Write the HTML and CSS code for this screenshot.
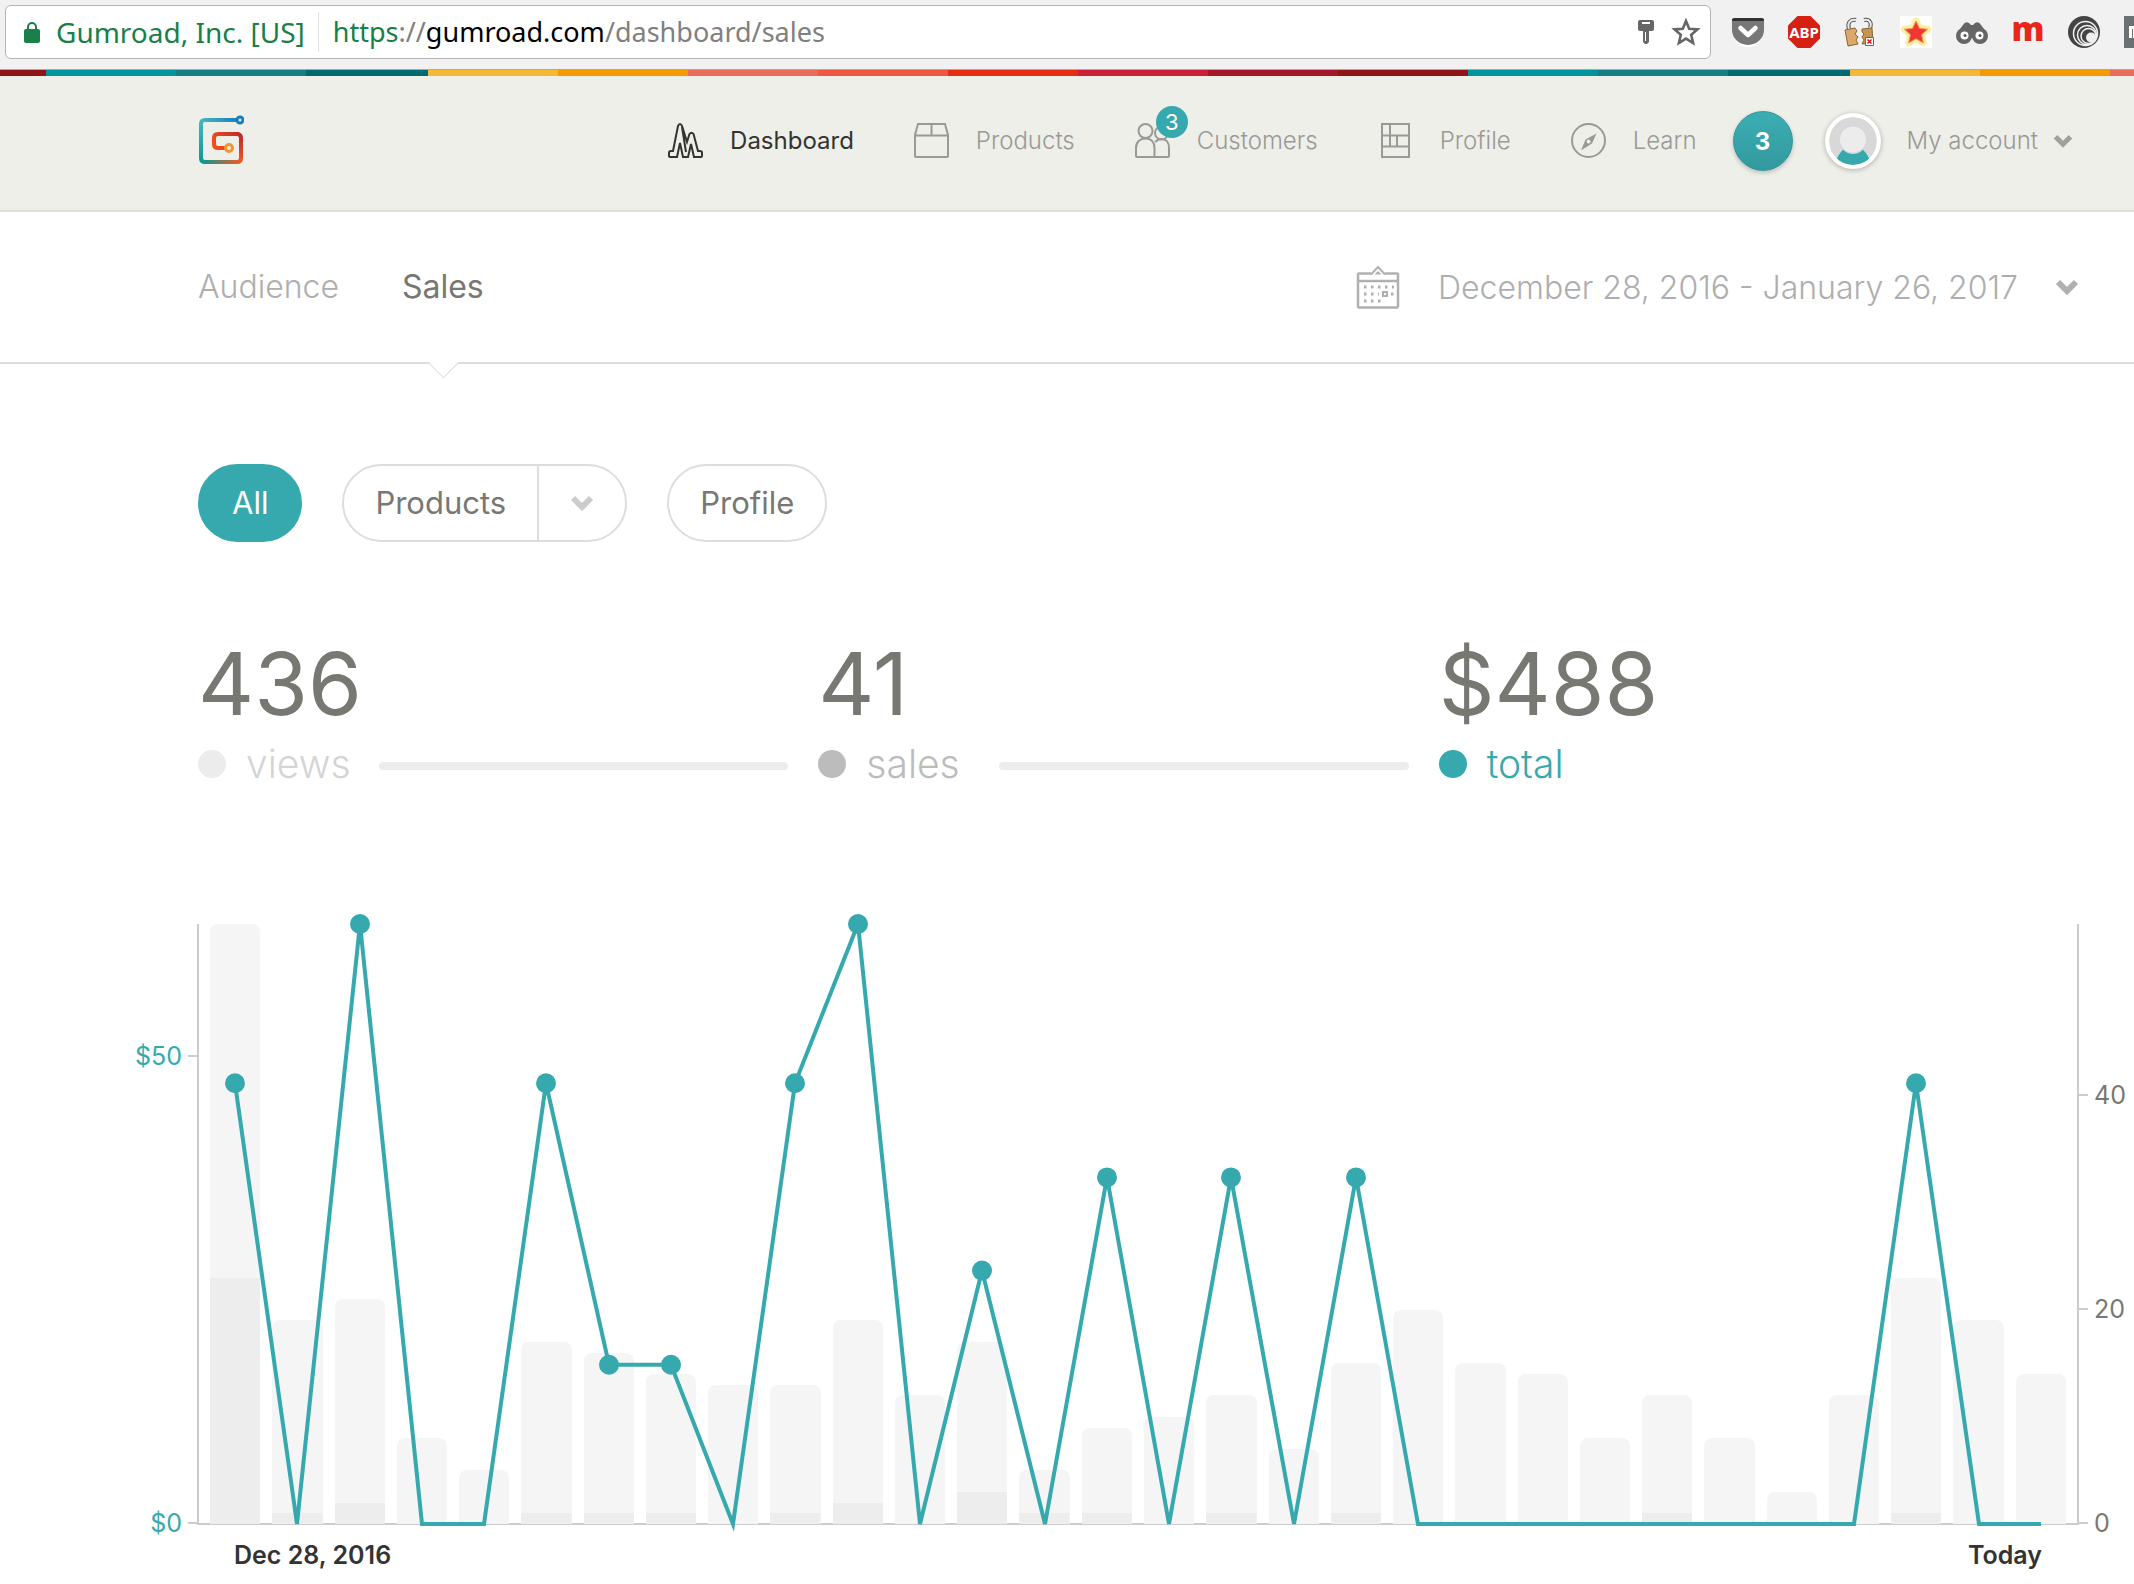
FILE: index.html
```html
<!DOCTYPE html>
<html lang="en">
<head>
<meta charset="utf-8">
<meta name="viewport" content="width=device-width, initial-scale=1">
<title>Gumroad – Sales</title>
<link rel="stylesheet" href="styles.css">
</head>
<body>
<div class="toolbar">
  <div class="address">
    <svg class="lock" width="16" height="22" viewBox="0 0 16 22"><path d="M4 10V6a4 4 0 0 1 8 0v4" fill="none" stroke="#188048" stroke-width="2"/><rect y="8" width="16" height="14" rx="2" fill="#188048"/></svg>
    <span class="owner">Gumroad, Inc. [US]</span>
    <span class="url"><span class="scheme">https</span>://<span class="host">gumroad.com</span>/dashboard/sales</span>
    <button class="bare" type="button" aria-label="Saved password"><svg width="16" height="24" viewBox="0 0 16 24"><path fill="#666" fill-rule="evenodd" d="M2 0h12q2 0 2 2v7q0 2-2 2h-3v11l-2 2H7l-2-2V11H2q-2 0-2-2V2q0-2 2-2zm2 2v2h8V2zm3 10v9h1v-9z"/></svg></button>
    <button class="bare" type="button" aria-label="Bookmark"><svg width="30" height="30" viewBox="0 0 30 30"><path d="M15 4l3.200 7.700 8.300.700-6.300 5.400 1.900 8.200-7.100-4.400-7.100 4.400 1.900-8.200-6.300-5.400 8.300-.700z" fill="none" stroke="#666" stroke-width="2.600"/></svg></button>
  </div>
  <div class="extensions">
    <svg width="32" height="32" viewBox="0 0 32 32"><path d="M0 5h32v10a16 16 0 0 1-32 0z" fill="#fff"/><path d="M0 3h32v11a16 15 0 0 1-32 0z" fill="#777"/><path d="M0 5V4q0-2 2-2h28q2 0 2 2v1z" fill="#333"/><path d="M8.500 12l7.500 7 7.500-7" fill="none" stroke="#fff" stroke-width="4.500" stroke-linecap="round" stroke-linejoin="round"/></svg>
    <svg width="32" height="32" viewBox="0 0 32 32"><path d="M9.500 0h13L32 9.500v13L22.500 32h-13L0 22.500v-13z" fill="#d62012"/><text class="abp" x="16" y="21.500" text-anchor="middle" fill="#fff">ABP</text></svg>
    <svg width="32" height="32" viewBox="0 0 32 32"><path d="M5 13C3 7 6 3 12 4M20 4c6-1 8 3 6 8" fill="none" stroke="#555" stroke-width="4"/><path d="M5 13C3 7 6 3 12 4M20 4c6-1 8 3 6 8" fill="none" stroke="#eee" stroke-width="2"/><path d="M1 14l10-2 2 3-2 3 3 3-2 3 2 4-10 2z" fill="#dba96b" stroke="#8a6434"/><path d="M18 13l10-1 1 15-11 1 2-4-2-3 2-3-2-2z" fill="#c89452" stroke="#8a6434"/><path d="M21.500 21.500h8v8h-8z" fill="#fff" stroke="#666"/><path d="M23.500 23.500l4 4m0-4l-4 4" stroke="#d11" stroke-width="1.500"/></svg>
    <svg width="32" height="32" viewBox="0 0 32 32"><path d="M0 0h32v32H0z" fill="#fff"/><path d="M16 5l3.300 7.500 8.200.800-6.200 5.400 1.900 8L16 22.500l-7.200 4.200 1.900-8-6.200-5.400 8.200-.800z" fill="#fdf0a0" stroke="#fdeea0" stroke-width="7" stroke-linejoin="round"/><path d="M16 5l3.500 7.500 8 .800-6 5.400 1.800 8L16 22.800l-7.300 3.900 1.800-8-6-5.400 8-.800z" fill="#f03535" stroke="#f58a45"/></svg>
    <svg width="32" height="32" viewBox="0 0 32 32"><path d="M1 17L7 9q2-4 6-2l2 2h2l2-2q4-2 6 2l6 8-7 5H8z" fill="#666"/><circle cx="8" cy="20" r="8" fill="#666"/><circle cx="24" cy="20" r="8" fill="#666"/><circle cx="8.500" cy="19.500" r="4" fill="#fff"/><circle cx="23.500" cy="19.500" r="4" fill="#fff"/><circle cx="9" cy="19.500" r="1.500" fill="#555"/><circle cx="24" cy="19.500" r="1.500" fill="#555"/></svg>
    <svg class="em-icon" width="32" height="32" viewBox="0 0 32 32"><text class="em" x="16" y="25" text-anchor="middle" fill="#e8261a">m</text></svg>
    <svg width="32" height="32" viewBox="0 0 32 32"><circle cx="16" cy="16" r="16" fill="#444"/><g fill="none" stroke="#f1f1f1" stroke-width="1.500"><circle cx="17.500" cy="17.500" r="12"/><circle cx="19" cy="19" r="9.500"/><circle cx="20.500" cy="20" r="7.500"/></g><circle cx="23" cy="21.500" r="5" fill="#eee"/></svg>
    <svg width="10" height="32" viewBox="0 0 10 32"><path d="M0 0h10v32H0z" fill="#6a7173"/><path d="M5 10h5v12H9v-9H8v9H5z" fill="#fff"/></svg>
  </div>
</div>

<header class="header">
  <a class="logo" href="#" aria-label="Gumroad">
    <svg width="46" height="51" viewBox="0 0 46 51" fill="none" stroke-width="4">
      <defs>
        <linearGradient id="ga" gradientUnits="userSpaceOnUse" x1="40" y1="5" x2="3" y2="46"><stop offset="0" stop-color="#1a7dc0"/><stop offset=".45" stop-color="#45b8bd"/><stop offset="1" stop-color="#0f9890"/></linearGradient>
        <linearGradient id="gb" gradientUnits="userSpaceOnUse" x1="6" y1="47" x2="42" y2="47"><stop offset="0" stop-color="#0f9890"/><stop offset="1" stop-color="#ee5a24"/></linearGradient>
        <linearGradient id="gc" gradientUnits="userSpaceOnUse" x1="43" y1="47" x2="43" y2="20"><stop offset="0" stop-color="#ee5a24"/><stop offset="1" stop-color="#c0272d"/></linearGradient>
        <linearGradient id="gd" gradientUnits="userSpaceOnUse" x1="43" y1="18" x2="18" y2="33"><stop offset="0" stop-color="#c0272d"/><stop offset="1" stop-color="#ee5018"/></linearGradient>
      </defs>
      <path d="M38 5H7Q3 5 3 9v34q0 4 4 4" stroke="url(#ga)"/>
      <path d="M6 47h34" stroke="url(#gb)"/>
      <path d="M39 47q4 0 4-4V23q0-3-3-4" stroke="url(#gc)"/>
      <path d="M41 19H20q-4 0-4 4v6q0 4 4 4h8" stroke="url(#gd)"/>
      <circle cx="42" cy="5" r="3" stroke="#1a7dc0" stroke-width="3"/><circle cx="31" cy="33" r="3.500" stroke="#f7932e" stroke-width="3"/>
    </svg>
  </a>
  <nav class="nav" aria-label="Main">
    <a class="nav-link active" href="#"><svg class="icon" viewBox="0 0 35 35"><path d="M2 34q-1 0-1-1v-3q0-2 2-2h2L10 3q2-4 4 0l5 16 2.500-8q2-2.500 4 0L30 28h2q2 0 2 2v3q0 1-1 1h-7l-3-13-3 13h-5l-3-14-3 14zM14 4l4 25"/></svg>Dashboard</a>
    <a class="nav-link" href="#"><svg class="icon" viewBox="0 0 35 35"><path d="M4 1h27l3 11v21q0 1-1 1H2q-1 0-1-1V12zM1 12.500h33M17.500 1v11"/></svg>Products</a>
    <a class="nav-link" href="#"><span class="icon-wrap"><svg class="icon" viewBox="0 0 35 35"><circle cx="10.500" cy="8" r="7"/><circle cx="26.500" cy="10" r="6.500"/><path d="M1 33V25c0-6 4-9.500 9.500-9.500s9 3.500 9 9.500v9H2q-1 0-1-1zM20 19q3-3 6.500-3c5 0 7.500 4 7.500 9v8q0 1-1 1H19"/></svg><span class="badge">3</span></span>Customers</a>
    <a class="nav-link" href="#"><svg class="icon" viewBox="0 0 35 35"><path d="M4 1h27v33H4zM4 12.500h27M4 23.500h27M12 1v22.500M19 12.500v11"/></svg>Profile</a>
    <a class="nav-link" href="#"><svg class="icon" viewBox="0 0 35 35"><circle cx="17.500" cy="17.500" r="16.500"/><path class="solid" d="M25.500 10.500l-4.500 10-11 7 4.500-11zM17.500 16.500a2 2 0 1 0 .1 0z"/></svg>Learn</a>
    <a class="count" href="#" aria-label="3 notifications">3</a>
    <a class="account" href="#">
      <svg class="avatar" viewBox="0 0 48 48"><defs><clipPath id="face"><circle cx="24" cy="24" r="24"/></clipPath></defs><g clip-path="url(#face)"><path d="M0 0h48v48H0z" fill="#d8d8d8"/><ellipse cx="24" cy="52" rx="18" ry="23" fill="#36a9ae"/><circle cx="24" cy="23.500" r="13.500" fill="#d8d8d8"/><circle cx="24" cy="22.500" r="13" fill="#ececec"/></g></svg>
      My account
      <svg class="chevron" width="20" height="14" viewBox="0 0 24 16"><path d="M3 3l9 9 9-9"/></svg>
    </a>
  </nav>
</header>

<div class="subnav">
  <nav class="tabs" aria-label="Reports">
    <a class="tab" href="#">Audience</a>
    <a class="tab current" href="#">Sales</a>
  </nav>
  <button class="range" type="button">
    <svg width="44" height="44" viewBox="0 0 44 44" fill="none" stroke="#b0b0b0" stroke-width="2.500"><path d="M15 8.500H3q-1 0-1 1V41q0 1.500 1 1.500h38q1 0 1-1.500V9.500q0-1-1-1H29M2 16h40"/><path d="M15 9.500l7-7.500 7 7.500" stroke-width="2"/><path d="M18.500 9.500h7L22 6z" fill="#b0b0b0" stroke="none"/><path d="M8 22h30M8 29h15M35 29h3M8 36h17" stroke-width="3" stroke-dasharray="2.500 4.500"/><path d="M27 27h4v4h-4z" stroke-width="2"/></svg>
    <span class="dates">December 28, 2016 - January 26, 2017</span>
    <svg class="chevron" width="24" height="16" viewBox="0 0 24 16"><path d="M3 3l9 9 9-9"/></svg>
  </button>
</div>

<main class="content">
  <div class="filters">
    <button class="pill selected" type="button">All</button>
    <div class="split">
      <button class="split-main" type="button">Products</button>
      <button class="split-more" type="button" aria-label="Choose a product"><svg class="chevron" width="24" height="16" viewBox="0 0 24 16"><path d="M3 3l9 9 9-9"/></svg></button>
    </div>
    <button class="pill" type="button">Profile</button>
  </div>

  <section class="stats" aria-label="Totals">
    <div class="stat views"><strong class="figure">436</strong><span class="legend"><i class="dot"></i><span class="name">views</span><i class="rule"></i></span></div>
    <div class="stat sales"><strong class="figure">41</strong><span class="legend"><i class="dot"></i><span class="name">sales</span><i class="rule"></i></span></div>
    <div class="stat total"><strong class="figure">$488</strong><span class="legend"><i class="dot"></i><span class="name">total</span></span></div>
  </section>
</main>

<section class="chart" aria-label="Views, sales and revenue by day">
  <div class="axis money">
    <span class="tick" style="top:22%">$50</span>
    <span class="tick" style="top:100%">$0</span>
  </div>
  <div class="plot">
    <ol class="bars">
      <li class="bar" style="--v:56;--s:23"></li><li class="bar" style="--v:19;--s:1"></li><li class="bar" style="--v:21;--s:2"></li><li class="bar" style="--v:8;--s:0"></li><li class="bar" style="--v:5;--s:0"></li>
      <li class="bar" style="--v:17;--s:1"></li><li class="bar" style="--v:16;--s:1"></li><li class="bar" style="--v:14;--s:1"></li><li class="bar" style="--v:13;--s:0"></li><li class="bar" style="--v:13;--s:1"></li>
      <li class="bar" style="--v:19;--s:2"></li><li class="bar" style="--v:12;--s:0"></li><li class="bar" style="--v:17;--s:3"></li><li class="bar" style="--v:5;--s:1"></li><li class="bar" style="--v:9;--s:1"></li>
      <li class="bar" style="--v:10;--s:0"></li><li class="bar" style="--v:12;--s:1"></li><li class="bar" style="--v:7;--s:0"></li><li class="bar" style="--v:15;--s:1"></li><li class="bar" style="--v:20;--s:0"></li>
      <li class="bar" style="--v:15;--s:0"></li><li class="bar" style="--v:14;--s:0"></li><li class="bar" style="--v:8;--s:0"></li><li class="bar" style="--v:12;--s:1"></li><li class="bar" style="--v:8;--s:0"></li>
      <li class="bar" style="--v:3;--s:0"></li><li class="bar" style="--v:12;--s:0"></li><li class="bar" style="--v:23;--s:1"></li><li class="bar" style="--v:19;--s:0"></li><li class="bar" style="--v:14;--s:0"></li>
    </ol>
    <svg class="revenue" viewBox="0 0 1878 599" preserveAspectRatio="none" aria-hidden="true">
      <path class="line" d="M36 159L98 599L161 0L223 599H285L347 159L410 440H472L534 599L596 159L659 0L721 599L783 346L846 599L908 253L970 599L1032 253L1095 599L1157 253L1219 599H1655L1717 159L1780 599H1842"/>
      <path class="points" d="M36 159h0M161 0h0M347 159h0M410 440h0M472 440h0M596 159h0M659 0h0M783 346h0M908 253h0M1032 253h0M1157 253h0M1717 159h0"/>
    </svg>
  </div>
  <div class="axis count-axis">
    <span class="tick" style="top:28.6%">40</span>
    <span class="tick" style="top:64.3%">20</span>
    <span class="tick" style="top:100%">0</span>
  </div>
  <div class="days"><span>Dec 28, 2016</span><span>Today</span></div>
</section>
</body>
</html>
```
FILE: styles.css
```css
* { box-sizing: border-box; }

body {
  margin: 0;
  background: #fff;
  color: #787872;
  font-family: Inter, "Liberation Sans", sans-serif;
}

a { color: inherit; text-decoration: none; }

button {
  margin: 0;
  padding: 0;
  border: 0;
  background: none;
  color: inherit;
  font: inherit;
}

svg { display: block; flex: none; }

/* Browser bar */
.toolbar {
  display: flex;
  align-items: flex-start;
  gap: 21px;
  height: 70px;
  padding: 5px 0 0 5px;
  overflow: hidden;
  border-bottom: 1px solid #a9a9a9;
  background: #f1f1f1;
}

.address {
  display: flex;
  flex: 1;
  align-items: center;
  height: 54px;
  padding: 0 9px 0 18px;
  border: 1px solid #b4b4b4;
  border-radius: 6px;
  background: #fff;
  color: #808080;
  font-family: "Noto Sans", sans-serif;
  font-size: 27px;
  white-space: nowrap;
}

.owner {
  height: 40px;
  margin-left: 16px;
  padding-right: 13px;
  border-right: 1px solid #e3e3e3;
  color: #188048;
  font-size: 28px;
  line-height: 40px;
}

.url { flex: 1; height: 40px; padding-left: 14px; line-height: 40px; }
.scheme { color: #188048; }
.host { color: #000; }
.bare + .bare { margin-left: 17px; }

.extensions { display: flex; gap: 24px; padding-top: 11px; }
.abp { font: bold 15px "Noto Sans", sans-serif; }
.em { font: 800 33px "Open Sans", sans-serif; }
.em-icon { overflow: visible; }

/* Site header */
.header {
  display: flex;
  align-items: center;
  justify-content: space-between;
  height: 142px;
  padding: 1px 61px 0 198px;
  border-bottom: 2px solid #dedfd4;
  background:
    repeating-linear-gradient(90deg,
      #00959a 0 130px, #147e82 130px 260px, #006a70 260px 382px,
      #f5b836 382px 512px, #f49a00 512px 642px, #e96b5c 642px 772px,
      #ee5740 772px 902px, #e52d14 902px 1032px, #c91f37 1032px 1162px,
      #a5182b 1162px 1292px, #8e1418 1292px 1422px) -1376px 0 / 4266px 6px no-repeat,
    #eeefe8;
}

.nav {
  display: flex;
  align-items: center;
  color: #999997;
  font-size: 24px;
  white-space: nowrap;
}

.nav-link { display: flex; align-items: center; gap: 27px; margin-right: 60px; font-weight: 300; }
.nav-link:nth-child(5) { margin-right: 36px; }
.active { color: #333; font-weight: 400; }
.icon { width: 35px; height: 35px; fill: none; stroke: currentColor; stroke-width: 2; }
.solid { fill: currentColor; fill-rule: evenodd; stroke: none; }
.icon-wrap { position: relative; }

.badge {
  position: absolute;
  top: -17px;
  left: 21px;
  width: 32px;
  height: 32px;
  border-radius: 50%;
  background: #36a9ae;
  color: #fff;
  font-size: 22px;
  font-weight: 400;
  line-height: 32px;
  text-align: center;
}

.count {
  width: 60px;
  height: 60px;
  margin-right: 32px;
  border: 1px solid #2f979c;
  border-radius: 50%;
  background: linear-gradient(#3aaeb4, #33999e);
  box-shadow: 0 2px 4px #0003;
  color: #fff;
  font-weight: 700;
  line-height: 60px;
  text-align: center;
}

.account { display: flex; align-items: center; font-weight: 300; }

.avatar {
  width: 56px;
  height: 56px;
  margin-right: 26px;
  border: 4px solid #fff;
  border-radius: 50%;
  background: #fff;
  box-shadow: 0 1px 4px 1px #0003;
}

.chevron { fill: none; stroke: #b0b0b0; stroke-width: 6; }
.account .chevron { margin-left: 15px; stroke: #a0a09e; }

/* Report tabs */
.subnav {
  display: flex;
  justify-content: space-between;
  height: 152px;
  padding: 0 55px 0 198px;
  border-bottom: 2px solid #ddd;
  color: #aeaeae;
  font-size: 32px;
  font-weight: 300;
  white-space: nowrap;
}

.tabs { display: flex; gap: 63px; }
.tab { position: relative; height: 152px; line-height: 150px; }
.current { color: #787872; font-weight: 400; }

.current::after {
  content: "";
  position: absolute;
  bottom: -10px;
  left: calc(50% - 10px);
  width: 20px;
  height: 20px;
  border: solid #ddd;
  border-width: 0 1px 1px 0;
  background: #fff;
  transform: rotate(45deg);
}

.range { display: flex; align-items: center; }
.dates { margin: 0 37px 0 38px; }

/* Filters and totals */
.content { padding: 100px 75px 0 198px; }
.filters { display: flex; gap: 40px; font-size: 31px; }

.pill, .split {
  height: 78px;
  border: 2px solid #ddd;
  border-radius: 39px;
}

.pill { padding: 0 31px 2px; }
.selected { padding: 0 32px 2px; border-color: #36a9ae; background: #36a9ae; color: #fff; }
.split { display: flex; }
.split-main { padding: 0 31px 2px; border-right: 2px solid #ddd; }
.split-more { display: grid; place-items: center; width: 86px; }
.split .chevron { stroke: #ccc; }

.stats { display: grid; grid-template-columns: repeat(3, 1fr); margin-top: 92px; }
.figure { display: block; height: 100px; font-size: 87px; font-weight: 400; line-height: 100px; }

.legend {
  display: flex;
  align-items: center;
  height: 60px;
  font-size: 39px;
  font-weight: 300;
}

.name { padding-bottom: 2px; }
.dot { width: 28px; height: 28px; margin-right: 20px; border-radius: 50%; background: currentColor; }
.rule { flex: 1; height: 8px; margin: 4px 30px 0 28px; border-radius: 4px; background: #ececec; }
.views .legend { color: #d4d4d4; }
.views .dot { background: #ececec; }
.sales .legend { color: #bcbcbc; }
.sales .rule { margin-left: 39px; }
.total .legend { color: #36a9ae; }

/* Daily chart */
.chart {
  display: grid;
  grid-template-columns: 197px 1fr 55px;
  grid-template-rows: 601px auto;
  margin-top: 130px;
  font-size: 25px;
}

.axis { position: relative; margin-bottom: 2px; }

.tick {
  position: absolute;
  display: flex;
  align-items: center;
  gap: 6px;
  height: 30px;
  margin-top: -15px;
  line-height: 30px;
}

.money { color: #36a9ae; }
.money .tick { right: 0; }
.count-axis .tick { left: 0; flex-direction: row-reverse; }
.tick::after { content: ""; width: 9px; height: 2px; background: #ccc; }

.plot {
  position: relative;
  border: solid #ccc;
  border-width: 0 2px 2px;
}

.bars {
  display: grid;
  grid-template-columns: repeat(30, 1fr);
  align-items: end;
  gap: 12px;
  height: 600px;
  margin: 0;
  padding: 0 11px;
  list-style: none;
}

.bar {
  height: calc(var(--v) / 56 * 600px);
  border-radius: 8px 8px 0 0;
  background: linear-gradient(#ededed, #ededed) bottom / 100% calc(var(--s) / 56 * 600px) no-repeat #f5f5f5;
}

.revenue {
  position: absolute;
  top: 0;
  left: 0;
  width: 100%;
  height: 600px;
  overflow: visible;
}

.line, .points { fill: none; stroke: #36a9ae; vector-effect: non-scaling-stroke; }
.line { stroke-width: 4; }
.points { stroke-width: 20; stroke-linecap: round; }

.days {
  display: flex;
  grid-column: 2;
  justify-content: space-between;
  height: 59px;
  padding: 12px 37px 0;
  color: #333;
  font-weight: 600;
  line-height: 36px;
}
```
